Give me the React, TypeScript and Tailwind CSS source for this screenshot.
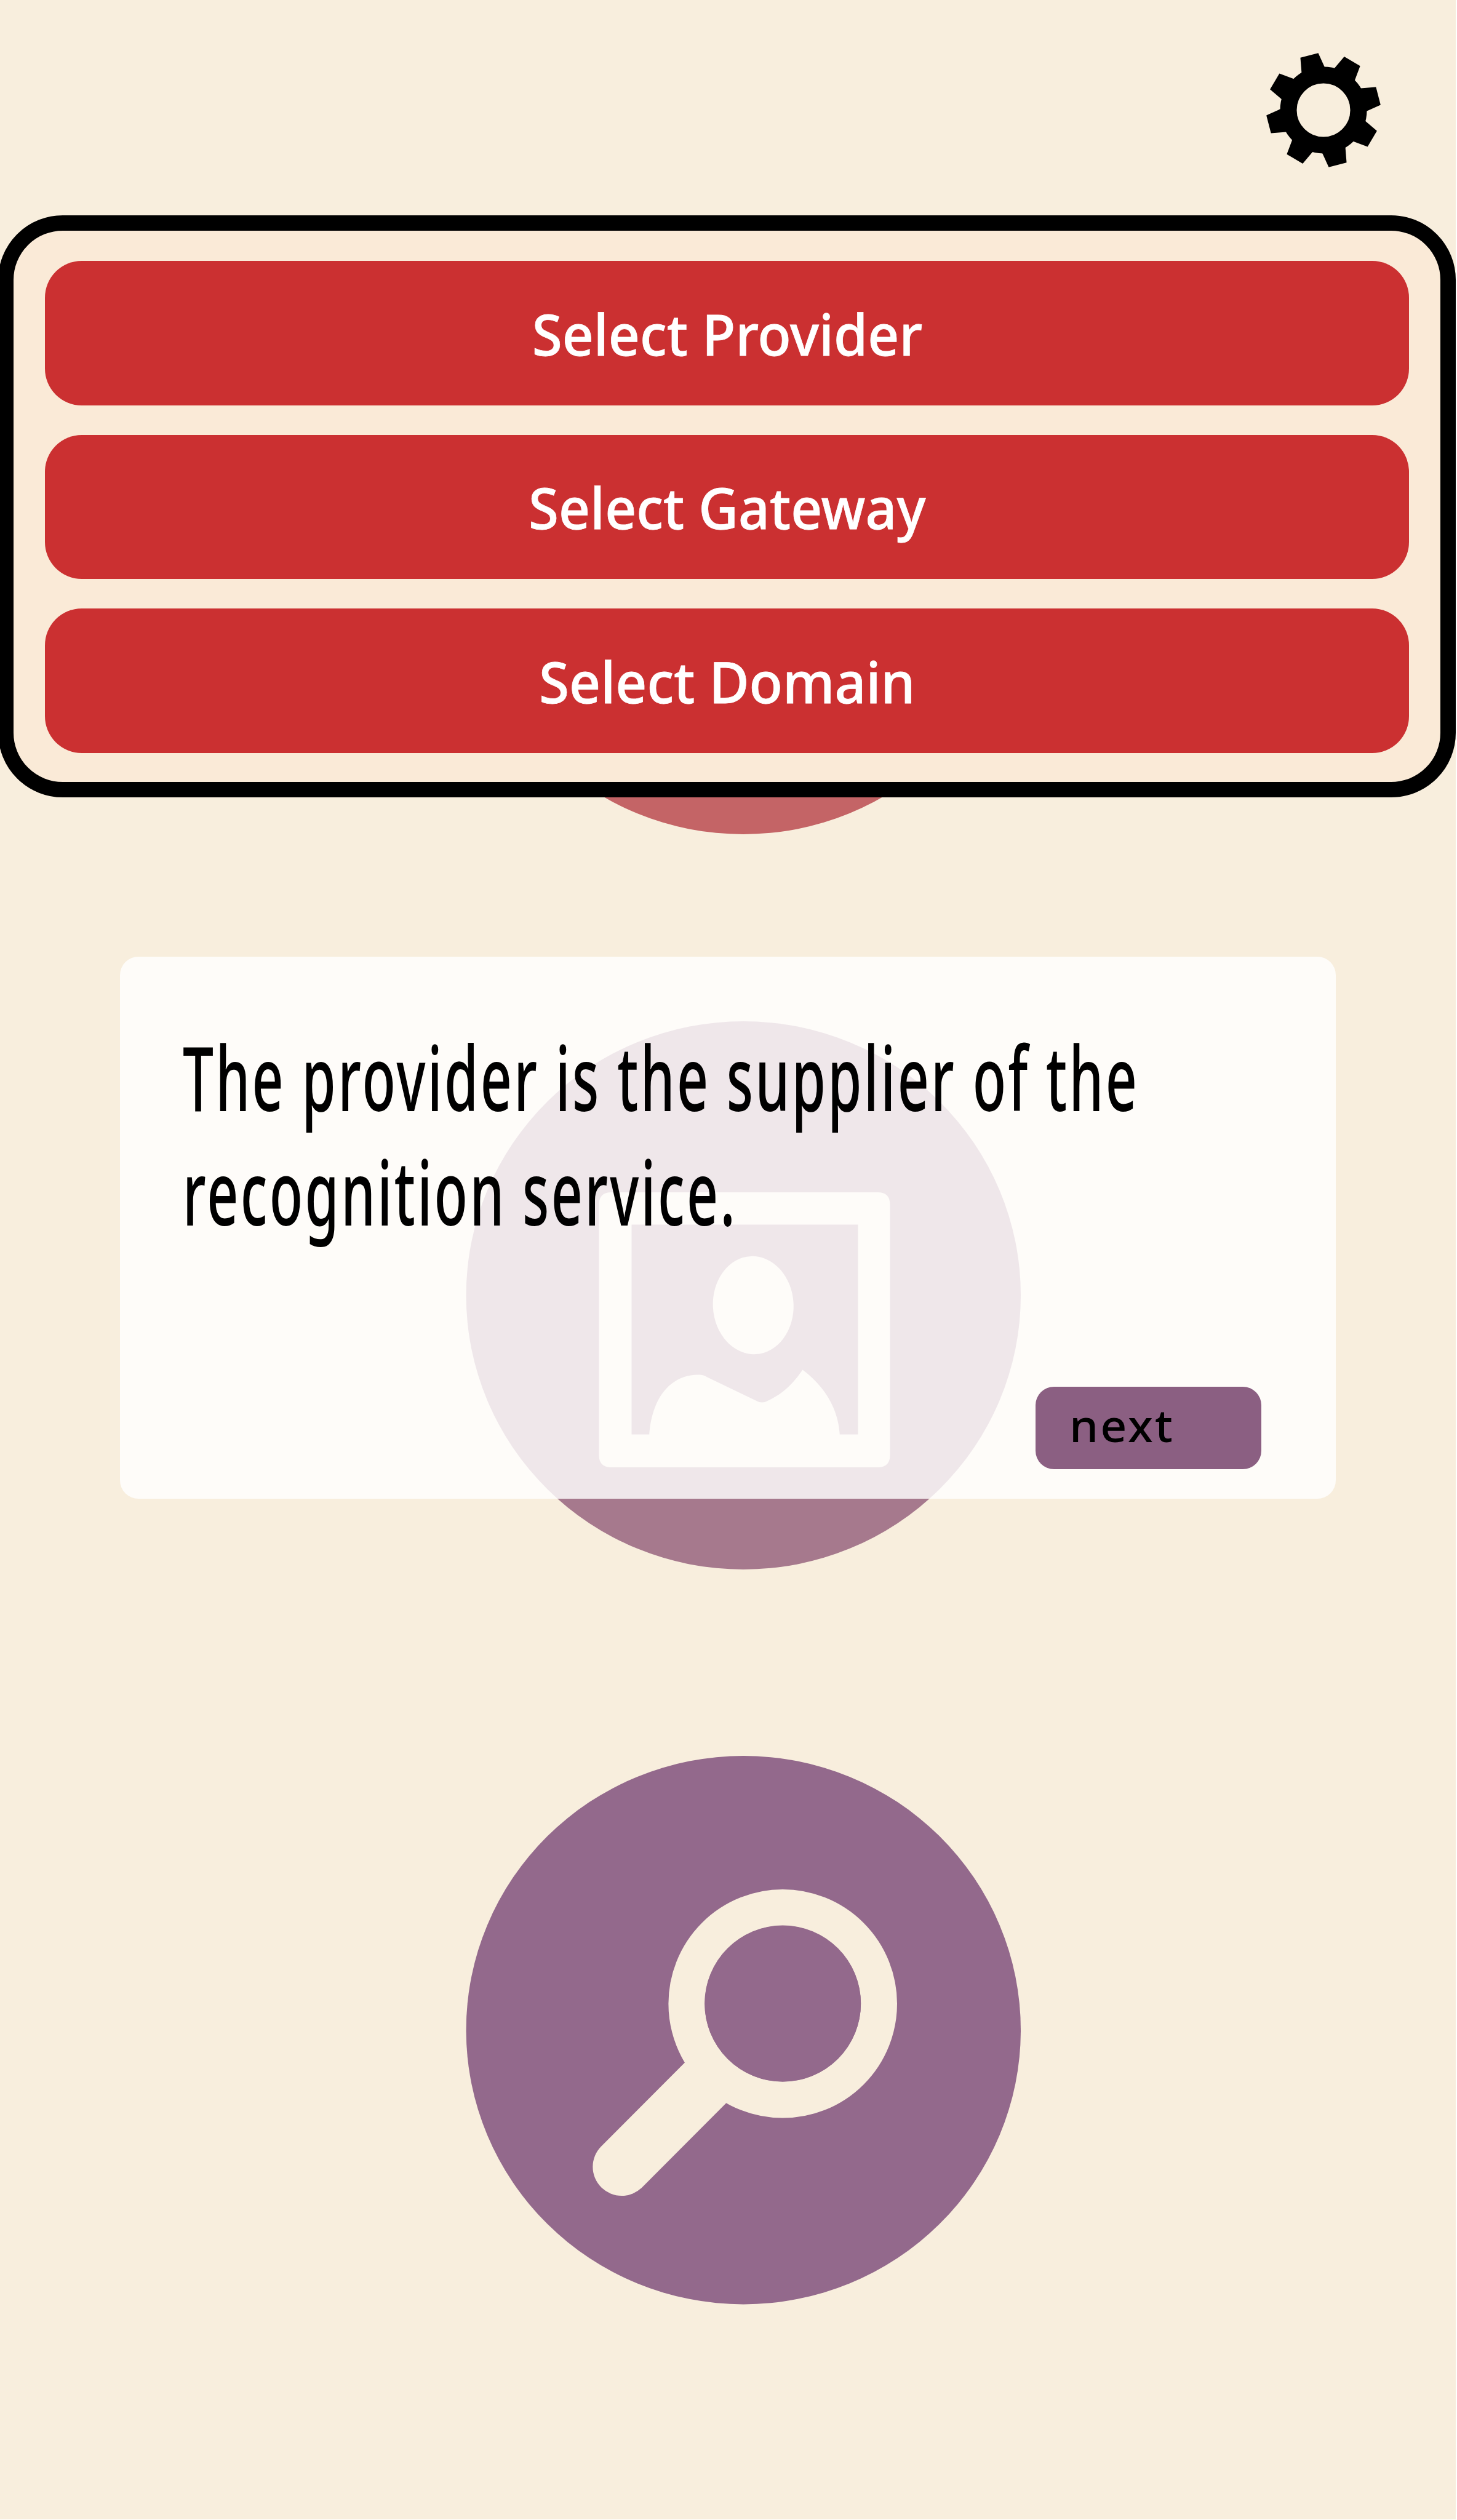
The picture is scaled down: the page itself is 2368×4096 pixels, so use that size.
const menuItems = ["Select Provider", "Select Gateway", "Select Domain"];

const gearTeeth = [0, 45, 90, 135, 180, 225, 270, 315];

function GearIcon() {
  return (
    <svg className="h-[190px] w-[190px]" viewBox="-95 -95 190 190">
      <g transform="rotate(-14.5)">
        {gearTeeth.map((angle) => (
          <path key={angle} d="M-19.3 -64 V-67.3 L-15 -92 H15 L19.3 -67.3 V-64 Z" transform={`rotate(${angle})`} />
        ))}
      </g>
      <circle r="57" fill="none" stroke="#000" strokeWidth="27" />
    </svg>
  );
}

function PortraitIcon() {
  return (
    <svg className="h-[892px] w-[902px]" viewBox="757 1660 902 892">
      <ellipse cx="1208.300" cy="2106.500" rx="450.700" ry="445.500" fill="#a6798d" />
      <g fill="#f8eedd" transform="translate(0.500 0.500)">
        <path
          fillRule="evenodd"
          d="M993 1938.600H1426Q1446 1938.600 1446 1958.600V2365.600Q1446 2385.600 1426 2385.600H993Q973 2385.600 973 2365.600V1958.600Q973 1938.600 993 1938.600ZM1026 1991V2332H1394V1991Z"
        />
        <ellipse cx="1223.700" cy="2122" rx="65.500" ry="79.700" transform="rotate(-3 1223.700 2122)" />
        <path d="M1054.600 2334C1058 2275 1088 2234 1136 2235Q1143 2235 1149 2239L1228 2277Q1238 2283 1248 2277C1272 2266 1288 2250 1304 2227C1340 2254 1362 2290 1364.400 2334Z" />
      </g>
    </svg>
  );
}

function SearchIcon() {
  return (
    <svg className="h-[892px] w-[902px]" viewBox="757 2854 902 892">
      <ellipse cx="1208.300" cy="3299.700" rx="450.700" ry="445.700" fill="#93698c" />
      <g transform="translate(0.500 0.500)">
        <circle cx="1271.700" cy="3256.300" r="156.300" fill="none" stroke="#f8eedd" strokeWidth="59" />
        <path d="M1009.900 3521.500L1148 3383" stroke="#f8eedd" strokeWidth="94" strokeLinecap="round" />
        <circle cx="1271.700" cy="3256" r="127" fill="#93698c" />
      </g>
    </svg>
  );
}

export default function App() {
  return (
    <div className="h-[4096px] w-[2368px] bg-white">
      <div className="relative flex h-[4095px] w-[2365.500px] flex-col overflow-hidden bg-[#f8eedd] font-['Noto_Sans',sans-serif]">
        <header className="flex h-[464px] shrink-0 items-start justify-end pt-[84px] pr-[119.500px]">
          <GearIcon />
        </header>

        <main className="flex flex-col gap-[303px] pl-[757px]">
          <div className="h-[892px] w-[902px] rounded-[50%] bg-[#c46466]" />
          <PortraitIcon />
          <SearchIcon />
        </main>

        <nav className="absolute top-[350px] -left-[3px] flex h-[946px] w-[2369px] flex-col gap-[48px] rounded-[105px] border-[25px] border-black bg-[#faead7] px-[51px] pt-[49px]">
          {menuItems.map((label) => (
            <button key={label} className="flex h-[234.500px] w-full shrink-0 items-center justify-center rounded-[60px] bg-[#cb3031]">
              <span className="scale-x-[0.953] text-[93.500px] leading-none font-medium whitespace-nowrap text-white [-webkit-text-stroke:0.8px_white]">
                {label}
              </span>
            </button>
          ))}
        </nav>

        <section className="absolute top-[1555px] left-[195px] flex h-[881px] w-[1976px] flex-col rounded-[30px] bg-white/82 pt-[102px] pl-[102px] text-black">
          <p className="w-[2700px] origin-left scale-x-[0.610] text-[146px] leading-[186px] font-medium tracking-[5.500px]">
            The provider is the supplier of the
            <br />
            recognition service.
          </p>
          <button className="mt-[225px] ml-[1386px] flex h-[134px] w-[367px] items-center rounded-[30px] bg-[#8b5f82] pb-[12px] pl-[55px] text-[73px] leading-none font-medium tracking-[3px]">
            <span className="origin-left scale-x-[1.030]">next</span>
          </button>
        </section>
      </div>
    </div>
  );
}
